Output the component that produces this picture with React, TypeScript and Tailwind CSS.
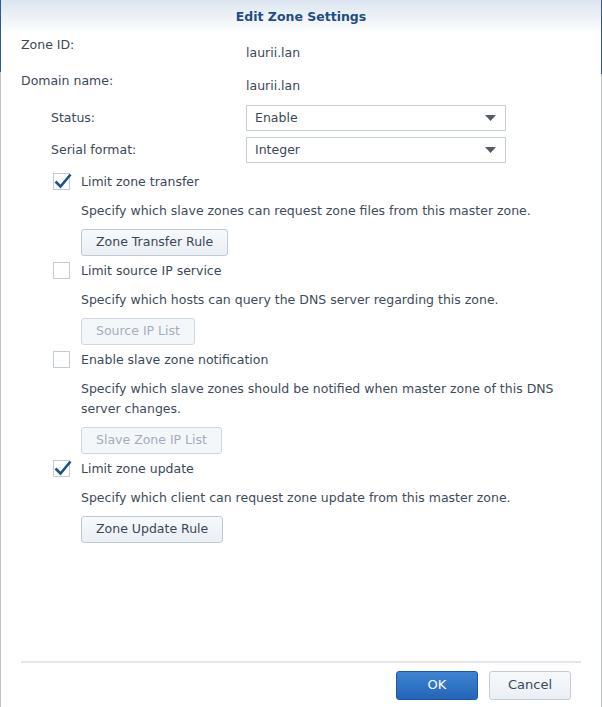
import React from "react"

const font = { fontFamily: '"DejaVu Sans", Verdana, sans-serif' }

function Check({ checked }: { checked?: boolean }) {
  return (
    <div className="relative h-[17px] w-[17px] shrink-0 border border-[#c3cbd5] bg-white">
      {checked && (
        <svg className="absolute -left-[1px] -top-[3px]" width="20" height="20" viewBox="0 0 20 20">
          <path d="M2.5 10.5 L7.5 15.5 L17.5 3.5" fill="none" stroke="#1f4f8d" strokeWidth="2.6" strokeLinejoin="miter" />
        </svg>
      )}
    </div>
  )
}

function Btn({ children, disabled }: { children: React.ReactNode; disabled?: boolean }) {
  return (
    <button
      className={
        disabled
          ? "h-[27px] rounded-[3px] border border-[#cfd8e2] bg-[#f4f7fa] px-[14px] text-[12.5px] text-[#a3adb9]"
          : "h-[27px] rounded-[3px] border border-[#bec9d5] bg-gradient-to-b from-[#f7f9fb] to-[#eaeff4] px-[14px] text-[12.5px] text-[#3a4757]"
      }
    >
      {children}
    </button>
  )
}

function Select({ value }: { value: string }) {
  return (
    <div className="flex h-[26px] w-[260px] items-center justify-between border border-[#c8d1db] bg-white pl-[8px] pr-[9px] text-[12.5px] text-[#3a4757]">
      <span>{value}</span>
      <svg width="11" height="6" viewBox="0 0 11 6">
        <path d="M0 0 H11 L5.5 6 Z" fill="#555c66" />
      </svg>
    </div>
  )
}

function Option({
  checked,
  label,
  desc,
  button,
  disabled,
}: {
  checked?: boolean
  label: string
  desc: string
  button: string
  disabled?: boolean
}) {
  return (
    <div className="pl-[32px]">
      <div className="flex items-center gap-[11px]">
        <Check checked={checked} />
        <span className="leading-[17px]">{label}</span>
      </div>
      <div className="mt-[11px] w-[528px] pl-[28px] leading-[20px] text-[#3e4b5b]">{desc}</div>
      <div className="mt-[8px] pl-[28px]">
        <Btn disabled={disabled}>{button}</Btn>
      </div>
    </div>
  )
}

export default function App() {
  return (
    <div className="flex h-[707px] w-[602px] bg-white text-[12.5px] text-[#3b4858]" style={font}>
      <div className="flex w-[1px] flex-col">
        <div className="h-[72px] bg-[#2c5a95]" />
        <div className="flex-1 bg-[#bfc3c8]" />
      </div>
      <div className="flex flex-1 flex-col">
        {/* title */}
        <div className="flex h-[34px] items-center justify-center bg-gradient-to-b from-[#dce5ef] to-white text-[12.5px] font-bold text-[#1f4b87]">
          Edit Zone Settings
        </div>

        <div className="flex-1 pl-[20px]">
          <div className="mt-[3px] flex">
            <div className="w-[225px] leading-4">Zone ID:</div>
            <div className="mt-[8px] leading-4">laurii.lan</div>
          </div>
          <div className="mt-[12px] flex">
            <div className="w-[225px] leading-4">Domain name:</div>
            <div className="mt-[5px] leading-4">laurii.lan</div>
          </div>
          <div className="mt-[11px] flex items-center">
            <div className="w-[225px] pl-[30px]">Status:</div>
            <Select value="Enable" />
          </div>
          <div className="mt-[6px] flex items-center">
            <div className="w-[225px] pl-[30px]">Serial format:</div>
            <Select value="Integer" />
          </div>

          <div className="mt-[10px] flex flex-col gap-[6px]">
            <Option
              checked
              label="Limit zone transfer"
              desc="Specify which slave zones can request zone files from this master zone."
              button="Zone Transfer Rule"
            />
            <Option
              label="Limit source IP service"
              desc="Specify which hosts can query the DNS server regarding this zone."
              button="Source IP List"
              disabled
            />
            <Option
              label="Enable slave zone notification"
              desc="Specify which slave zones should be notified when master zone of this DNS server changes."
              button="Slave Zone IP List"
              disabled
            />
            <Option
              checked
              label="Limit zone update"
              desc="Specify which client can request zone update from this master zone."
              button="Zone Update Rule"
            />
          </div>
        </div>

        {/* footer */}
        <div className="mx-[20px] h-[2px] bg-[#e3e5e8]" />
        <div className="flex h-[44px] items-center justify-end gap-[11px] pr-[30px]">
          <button className="h-[29px] w-[82px] rounded-[3px] border border-[#1c58a6] bg-gradient-to-b from-[#3f84d4] to-[#2464b6] text-[13px] text-white">
            OK
          </button>
          <button className="h-[29px] w-[82px] rounded-[3px] border border-[#c3ccd6] bg-gradient-to-b from-[#f7f9fb] to-[#eaeff4] text-[13px] text-[#3a4757]">
            Cancel
          </button>
        </div>
      </div>
      <div className="flex w-[1px] flex-col">
        <div className="h-[74px] bg-[#2c5a95]" />
        <div className="flex-1 bg-[#bfc3c8]" />
      </div>
    </div>
  )
}
